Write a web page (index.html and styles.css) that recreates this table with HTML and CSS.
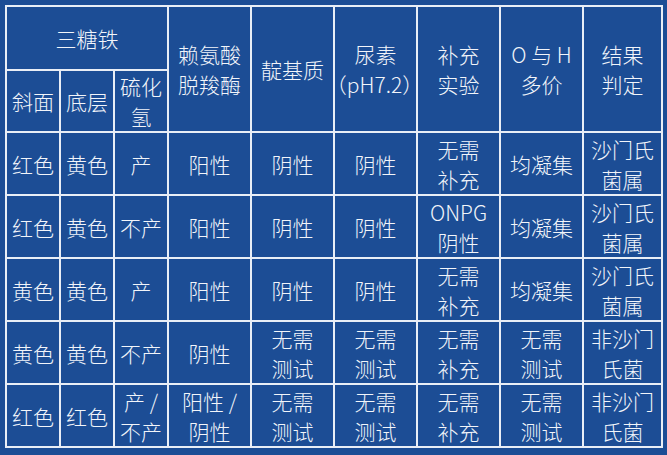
FILE: index.html
```html
<!DOCTYPE html>
<html lang="zh-CN">
<head>
<meta charset="utf-8">
<link rel="stylesheet" href="styles.css">
</head>
<body>
<table class="grid">
  <colgroup>
    <col class="c-s"><col class="c-s"><col class="c-s">
    <col class="c-m"><col class="c-m"><col class="c-m"><col class="c-m"><col class="c-m">
    <col class="c-l">
  </colgroup>
  <thead>
    <tr class="h1">
      <th colspan="3">三糖铁</th>
      <th rowspan="2">赖氨酸<br>脱羧酶</th>
      <th rowspan="2">靛基质</th>
      <th rowspan="2" class="wide">尿素<br><span class="ph">（pH7.2）</span></th>
      <th rowspan="2">补充<br>实验</th>
      <th rowspan="2">O 与 H<br>多价</th>
      <th rowspan="2">结果<br>判定</th>
    </tr>
    <tr class="h2">
      <th>斜面</th>
      <th>底层</th>
      <th>硫化<br>氢</th>
    </tr>
  </thead>
  <tbody>
    <tr>
      <td>红色</td><td>黄色</td><td>产</td><td>阳性</td><td>阴性</td><td>阴性</td><td>无需<br>补充</td><td>均凝集</td><td>沙门氏<br>菌属</td>
    </tr>
    <tr>
      <td>红色</td><td>黄色</td><td>不产</td><td>阳性</td><td>阴性</td><td>阴性</td><td>ONPG<br>阴性</td><td>均凝集</td><td>沙门氏<br>菌属</td>
    </tr>
    <tr>
      <td>黄色</td><td>黄色</td><td>产</td><td>阳性</td><td>阴性</td><td>阴性</td><td>无需<br>补充</td><td>均凝集</td><td>沙门氏<br>菌属</td>
    </tr>
    <tr>
      <td>黄色</td><td>黄色</td><td>不产</td><td>阴性</td><td>无需<br>测试</td><td>无需<br>测试</td><td>无需<br>补充</td><td>无需<br>测试</td><td>非沙门<br>氏菌</td>
    </tr>
    <tr>
      <td>红色</td><td>红色</td><td>产 /<br>不产</td><td>阳性 /<br>阴性</td><td>无需<br>测试</td><td>无需<br>测试</td><td>无需<br>补充</td><td>无需<br>测试</td><td>非沙门<br>氏菌</td>
    </tr>
  </tbody>
</table>
</body>
</html>
```

FILE: styles.css
```css
html, body {
  margin: 0;
  background: #1c4d95;
}
body {
  padding: 5px 0 0 5px;
  font-family: "Noto Sans CJK SC", "Noto Sans", sans-serif;
  color: #f2f5fa;
}
.grid {
  border-collapse: collapse;
  table-layout: fixed;
  width: 656px;
}
.c-s { width: 54px; }
.c-m { width: 83px; }
.c-l { width: 79px; }
.grid th,
.grid td {
  border: 2px solid #e9eef6;
  padding: 0;
  text-align: center;
  vertical-align: middle;
  font-size: 21px;
  font-weight: 300;
  line-height: 30px;
  white-space: nowrap;
  overflow: hidden;
}
.grid th { font-weight: 300; }
.grid th.wide { overflow: visible; }
.ph {
  display: inline-block;
  margin: 0 -12px 0 -14px;
}
.h1 { height: 64px; }
.h2 { height: 62px; }
.grid tbody tr { height: 63px; }
```
